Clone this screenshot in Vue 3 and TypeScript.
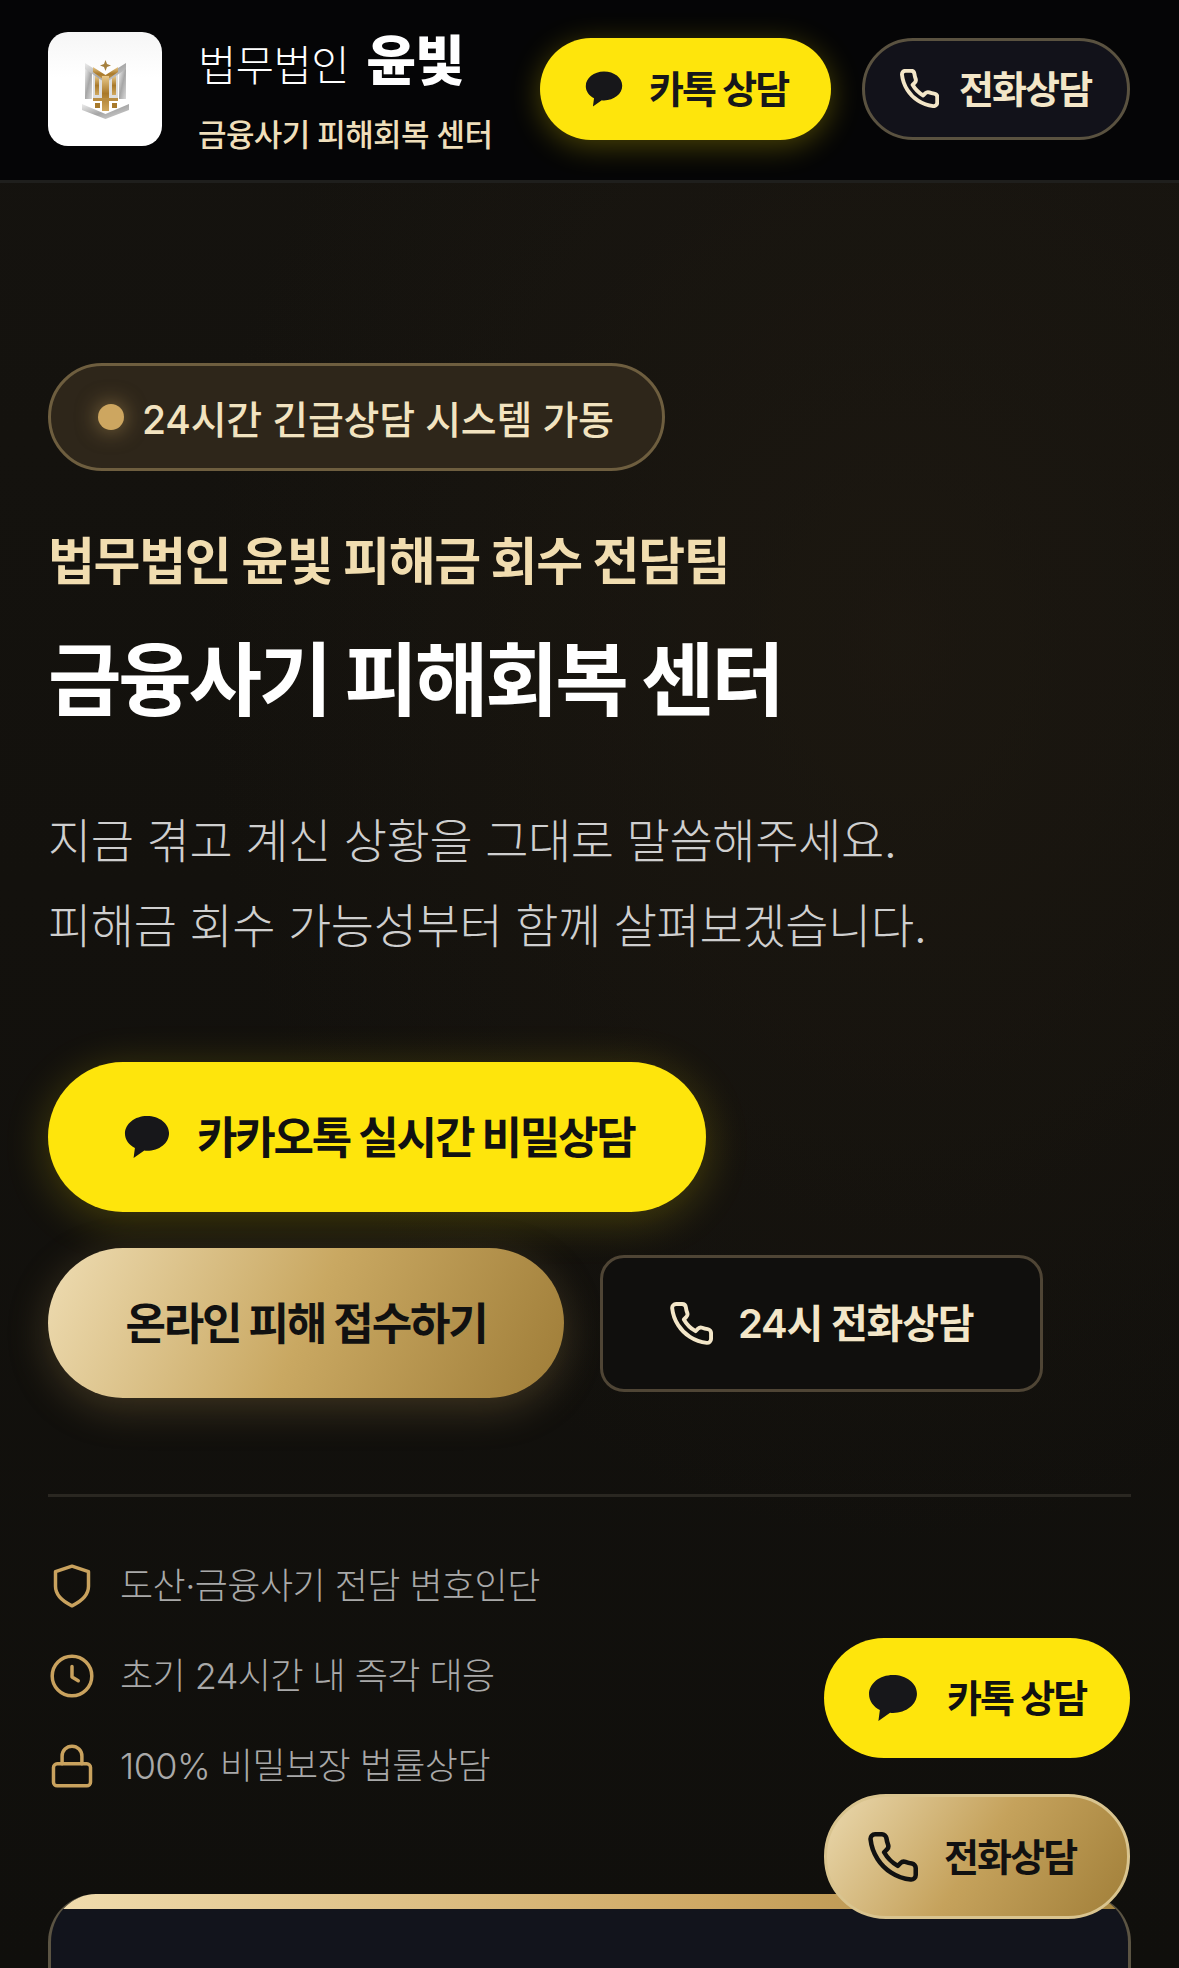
<script setup lang="ts">
interface TrustItem {
  text: string
  kind: 'shield' | 'clock' | 'lock'
}

const trustItems: TrustItem[] = [
  { text: '도산·금융사기 전담 변호인단', kind: 'shield' },
  { text: '초기 24시간 내 즉각 대응', kind: 'clock' },
  { text: '100% 비밀보장 법률상담', kind: 'lock' },
]

const bubblePath = 'M12 1C5.6 1 .5 5.1 .5 10.2c0 3.2 2.1 6 5.2 7.6L5 23l5.6-3.9c.5.1.9.1 1.4.1 6.4 0 11.5-4.1 11.5-9.2S18.4 1 12 1z'
const phonePath = 'M22 16.92v3a2 2 0 0 1-2.18 2 19.79 19.79 0 0 1-8.63-3.07 19.5 19.5 0 0 1-6-6 19.79 19.79 0 0 1-3.07-8.67A2 2 0 0 1 4.11 2h3a2 2 0 0 1 2 1.72c.13.96.36 1.9.7 2.81a2 2 0 0 1-.45 2.11L8.09 9.91a16 16 0 0 0 6 6l1.27-1.27a2 2 0 0 1 2.11-.45c.91.34 1.85.57 2.81.7A2 2 0 0 1 22 16.92z'
</script>

<template>
  <div class="page">
    <header class="topbar">
      <div class="brand">
        <div class="logo">
          <svg viewBox="0 0 47 60" width="47" height="60">
            <defs>
              <linearGradient id="silver" x1="0" y1="0" x2="1" y2="1">
                <stop offset="0" stop-color="#ececec" />
                <stop offset="0.5" stop-color="#a6a6a6" />
                <stop offset="1" stop-color="#dadada" />
              </linearGradient>
              <linearGradient id="goldm" x1="0" y1="0" x2="0" y2="1">
                <stop offset="0" stop-color="#e9c98a" />
                <stop offset="0.5" stop-color="#a9792a" />
                <stop offset="1" stop-color="#d0a85e" />
              </linearGradient>
            </defs>
            <rect x="3" y="10" width="7" height="30" fill="url(#silver)" />
            <rect x="37" y="10" width="7" height="30" fill="url(#silver)" />
            <rect x="11" y="14" width="9" height="26" fill="#dedede" />
            <rect x="27" y="14" width="9" height="26" fill="#dedede" />
            <rect x="13" y="17" width="4" height="19" fill="url(#goldm)" />
            <rect x="30" y="17" width="4" height="19" fill="url(#goldm)" />
            <polygon points="3,4 23.5,17 44,4 44,10 23.5,24 3,10" fill="url(#silver)" />
            <polygon points="11,8 23.5,16 36,8 36,13 23.5,22 11,13" fill="url(#goldm)" />
            <rect x="20" y="17" width="7" height="35" fill="url(#goldm)" />
            <rect x="11" y="39" width="25" height="3" fill="#b98d42" />
            <polygon points="23.5,1 25,5 29,6.5 25,8 23.5,12 22,8 18,6.5 22,5" fill="#a5803e" />
            <polygon points="0,45 23.5,55 47,45 47,51 23.5,60 0,51" fill="url(#silver)" />
            <rect x="13" y="44" width="5" height="5" fill="#a87a2c" />
            <rect x="30" y="44" width="5" height="5" fill="#a87a2c" />
          </svg>
        </div>
        <div class="brand-text">
          <div class="brand-name">법무법인 <strong>윤빛</strong></div>
          <div class="brand-sub">금융사기 피해회복 센터</div>
        </div>
      </div>
      <div class="top-actions">
        <button class="top-btn top-kakao">
          <svg class="ico-38" viewBox="0 0 24 24"><path :d="bubblePath" fill="#17171a" /></svg>
          <span>카톡 상담</span>
        </button>
        <button class="top-btn top-call">
          <svg class="ico-39" viewBox="1 1 22 22"><path :d="phonePath" fill="none" stroke="#f3e6c8" stroke-width="2.2" stroke-linecap="round" stroke-linejoin="round" /></svg>
          <span>전화상담</span>
        </button>
      </div>
    </header>

    <main class="hero">
      <div class="badge">
        <span class="dot"></span>
        <span>24시간 긴급상담 시스템 가동</span>
      </div>
      <h2 class="eyebrow">법무법인 윤빛 피해금 회수 전담팀</h2>
      <h1 class="title">금융사기 피해회복 센터</h1>
      <p class="lead">지금 겪고 계신 상황을 그대로 말씀해주세요.<br />피해금 회수 가능성부터 함께 살펴보겠습니다.</p>

      <div class="actions">
        <button class="cta cta-kakao">
          <svg class="ico-46" viewBox="0 0 24 24"><path :d="bubblePath" fill="#17171a" /></svg>
          <span>카카오톡 실시간 비밀상담</span>
        </button>
        <div class="action-row">
          <button class="cta cta-gold"><span>온라인 피해 접수하기</span></button>
          <button class="cta-line">
            <svg class="ico-43" viewBox="1 1 22 22"><path :d="phonePath" fill="none" stroke="#f3e6c8" stroke-width="2" stroke-linecap="round" stroke-linejoin="round" /></svg>
            <span>24시 전화상담</span>
          </button>
        </div>
      </div>

      <div class="divider"></div>

      <ul class="trust">
        <li v-for="item in trustItems" :key="item.kind">
          <svg class="ico-44" viewBox="0 0 24 24" fill="none" stroke="#c9a25e" stroke-width="1.9" stroke-linecap="round" stroke-linejoin="round">
            <path v-if="item.kind === 'shield'" d="M12 1.2l9 3v8c0 4.6-3.4 8-9 10.6-5.6-2.6-9-6-9-10.6v-8z" />
            <template v-else-if="item.kind === 'clock'">
              <circle cx="12" cy="12" r="10.8" />
              <path d="M12 6.8V12.6l3.4 2" />
            </template>
            <template v-else>
              <rect x="1.9" y="10.8" width="20.2" height="12" rx="2" />
              <path d="M6.6 10.8V6.6a5.4 5.4 0 0 1 10.8 0v4.2" />
            </template>
          </svg>
          <span>{{ item.text }}</span>
        </li>
      </ul>

      <section class="card">
        <div class="card-strip"></div>
      </section>
    </main>

    <div class="floating">
      <button class="float-btn float-kakao">
        <svg class="ico-50" viewBox="0 0 24 24"><path :d="bubblePath" fill="#17171a" /></svg>
        <span>카톡 상담</span>
      </button>
      <button class="float-btn float-call">
        <svg class="ico-50" viewBox="1 1 22 22"><path :d="phonePath" fill="none" stroke="#111" stroke-width="2" stroke-linecap="round" stroke-linejoin="round" /></svg>
        <span>전화상담</span>
      </button>
    </div>
  </div>
</template>

<style>
html, body {
  margin: 0;
  background: #0e0d0b;
}
</style>

<style scoped>
.page {
  position: relative;
  width: 1179px;
  height: 1968px;
  overflow: hidden;
  font-family: Inter, "Noto Sans CJK KR", sans-serif;
  background: radial-gradient(700px 900px at 900px 640px, rgba(33, 27, 18, 0.6) 0%, rgba(29, 23, 17, 0) 100%), linear-gradient(180deg, #15130f 0%, #13110d 45%, #100f0c 100%);
  color: #fff;
}
button {
  font-family: inherit;
  border: none;
  padding: 0;
  display: flex;
  align-items: center;
  box-sizing: border-box;
}
button span {
  padding-bottom: 5px;
}
svg {
  flex: none;
  display: block;
}
.ico-38 { width: 38px; height: 38px; }
.ico-39 { width: 39px; height: 39px; }
.ico-43 { width: 43px; height: 43px; }
.ico-44 { width: 44px; height: 44px; }
.ico-46 { width: 46px; height: 46px; }
.ico-50 { width: 50px; height: 50px; }

.topbar {
  height: 183px;
  box-sizing: border-box;
  border-bottom: 3px solid #1f1f1d;
  padding: 0 49px 3px 48px;
  display: flex;
  align-items: center;
  justify-content: space-between;
  background: #050506;
}
.brand {
  display: flex;
  align-items: center;
  gap: 36px;
}
.logo {
  width: 114px;
  height: 114px;
  border-radius: 20px;
  background: linear-gradient(180deg, #f6f6f6, #fff 40%);
  display: flex;
  align-items: center;
  justify-content: center;
}
.brand-text {
  display: flex;
  flex-direction: column;
  gap: 19px;
  padding-top: 5px;
}
.brand-name {
  font-size: 41.5px;
  line-height: 64px;
  font-weight: 300;
  letter-spacing: -0.01em;
  white-space: nowrap;
}
.brand-name strong {
  font-size: 54px;
  font-weight: 800;
  margin-left: 6px;
  letter-spacing: -0.02em;
}
.brand-sub {
  font-size: 31px;
  line-height: 36px;
  font-weight: 500;
  color: #efdfbb;
  letter-spacing: -0.02em;
  white-space: nowrap;
}
.top-actions {
  display: flex;
  gap: 31px;
}
.top-btn {
  height: 102px;
  border-radius: 51px;
  font-size: 38px;
  font-weight: 700;
  letter-spacing: -0.05em;
  white-space: nowrap;
}
.top-kakao {
  width: 291px;
  padding-left: 45px;
  gap: 26px;
  background: #fee50c;
  color: #17171a;
  box-shadow: 0 6px 30px rgba(254, 229, 0, 0.28);
}
.top-call {
  width: 268px;
  padding-left: 35px;
  gap: 20px;
  background: #12121a;
  color: #f3e6c8;
  border: 3px solid #5a5240;
}

.hero {
  padding: 180px 48px 0;
}
.badge {
  width: 617px;
  height: 108px;
  box-sizing: border-box;
  border: 3px solid #6e5e3f;
  border-radius: 54px;
  background: #2e261a;
  padding-left: 47px;
  display: flex;
  align-items: center;
  gap: 18px;
  font-size: 39px;
  font-weight: 500;
  letter-spacing: -0.005em;
  color: #f2e3c0;
  white-space: nowrap;
}
.dot {
  width: 26px;
  height: 26px;
  border-radius: 50%;
  background: #cda660;
  box-shadow: 0 0 22px rgba(205, 166, 96, 0.6);
}
.eyebrow {
  margin: 61px 0 0;
  font-size: 51px;
  line-height: 60px;
  font-weight: 700;
  letter-spacing: -0.026em;
  color: #f1ddb0;
  white-space: nowrap;
}
.title {
  margin: 40px 0 0;
  font-size: 80px;
  line-height: 96px;
  font-weight: 700;
  letter-spacing: -0.042em;
  color: #fff;
  white-space: nowrap;
}
.lead {
  margin: 70px 0 0;
  font-size: 47px;
  line-height: 85px;
  font-weight: 300;
  letter-spacing: -0.008em;
  color: #cfcfcf;
  white-space: nowrap;
}
.actions {
  margin-top: 94px;
  display: flex;
  flex-direction: column;
  gap: 36px;
}
.cta {
  height: 150px;
  border-radius: 75px;
  font-size: 44px;
  font-weight: 700;
  letter-spacing: -0.05em;
  color: #111;
  white-space: nowrap;
}
.cta-kakao {
  width: 658px;
  padding-left: 76px;
  gap: 27px;
  background: #fee50c;
  box-shadow: 0 8px 44px rgba(254, 229, 0, 0.22);
}
.action-row {
  display: flex;
  align-items: center;
  gap: 36px;
}
.cta-gold {
  width: 516px;
  justify-content: center;
  background: linear-gradient(115deg, #eedcb2 0%, #c9a862 50%, #9f7d38 100%);
  box-shadow: 0 10px 40px rgba(201, 163, 92, 0.25);
}
.cta-line {
  width: 443px;
  height: 137px;
  border-radius: 24px;
  border: 3px solid #4f4535;
  background: #100f0d;
  padding-left: 67px;
  gap: 25px;
  font-size: 40px;
  font-weight: 600;
  letter-spacing: -0.03em;
  color: #f3e6c8;
  white-space: nowrap;
}
.divider {
  margin-top: 96px;
  height: 3px;
  background: #2a2721;
}
.trust {
  list-style: none;
  margin: 62px 0 0;
  padding: 0;
  display: flex;
  flex-direction: column;
  gap: 36px;
}
.trust li {
  height: 54px;
  display: flex;
  align-items: center;
  gap: 26px;
  font-size: 36px;
  font-weight: 300;
  letter-spacing: -0.015em;
  color: #a9a9a9;
  white-space: nowrap;
}
.trust li span {
  padding-bottom: 6px;
}
.trust li svg {
  margin-left: 2px;
}
.card {
  margin-top: 101px;
  height: 300px;
  box-sizing: border-box;
  border: 3px solid #5b5443;
  border-top: none;
  border-bottom: none;
  border-radius: 48px 48px 0 0;
  background: #12141c;
  overflow: hidden;
}
.card-strip {
  height: 15px;
  background: linear-gradient(90deg, #f0dcae 0%, #cfa965 60%, #a5843f 100%);
}

.floating {
  position: absolute;
  right: 49px;
  top: 1638px;
  display: flex;
  flex-direction: column;
  gap: 36px;
}
.float-btn {
  width: 306px;
  border-radius: 62px;
  font-size: 38px;
  font-weight: 700;
  letter-spacing: -0.05em;
  color: #111;
  white-space: nowrap;
  padding-left: 44px;
}
.float-kakao {
  height: 120px;
  gap: 29px;
  background: #fee50c;
}
.float-call {
  height: 125px;
  gap: 26px;
  background: linear-gradient(125deg, #ead8ad 0%, #c5a25c 50%, #a17f39 100%);
  border: 3px solid #d9c48f;
  padding-left: 41px;
}
</style>
